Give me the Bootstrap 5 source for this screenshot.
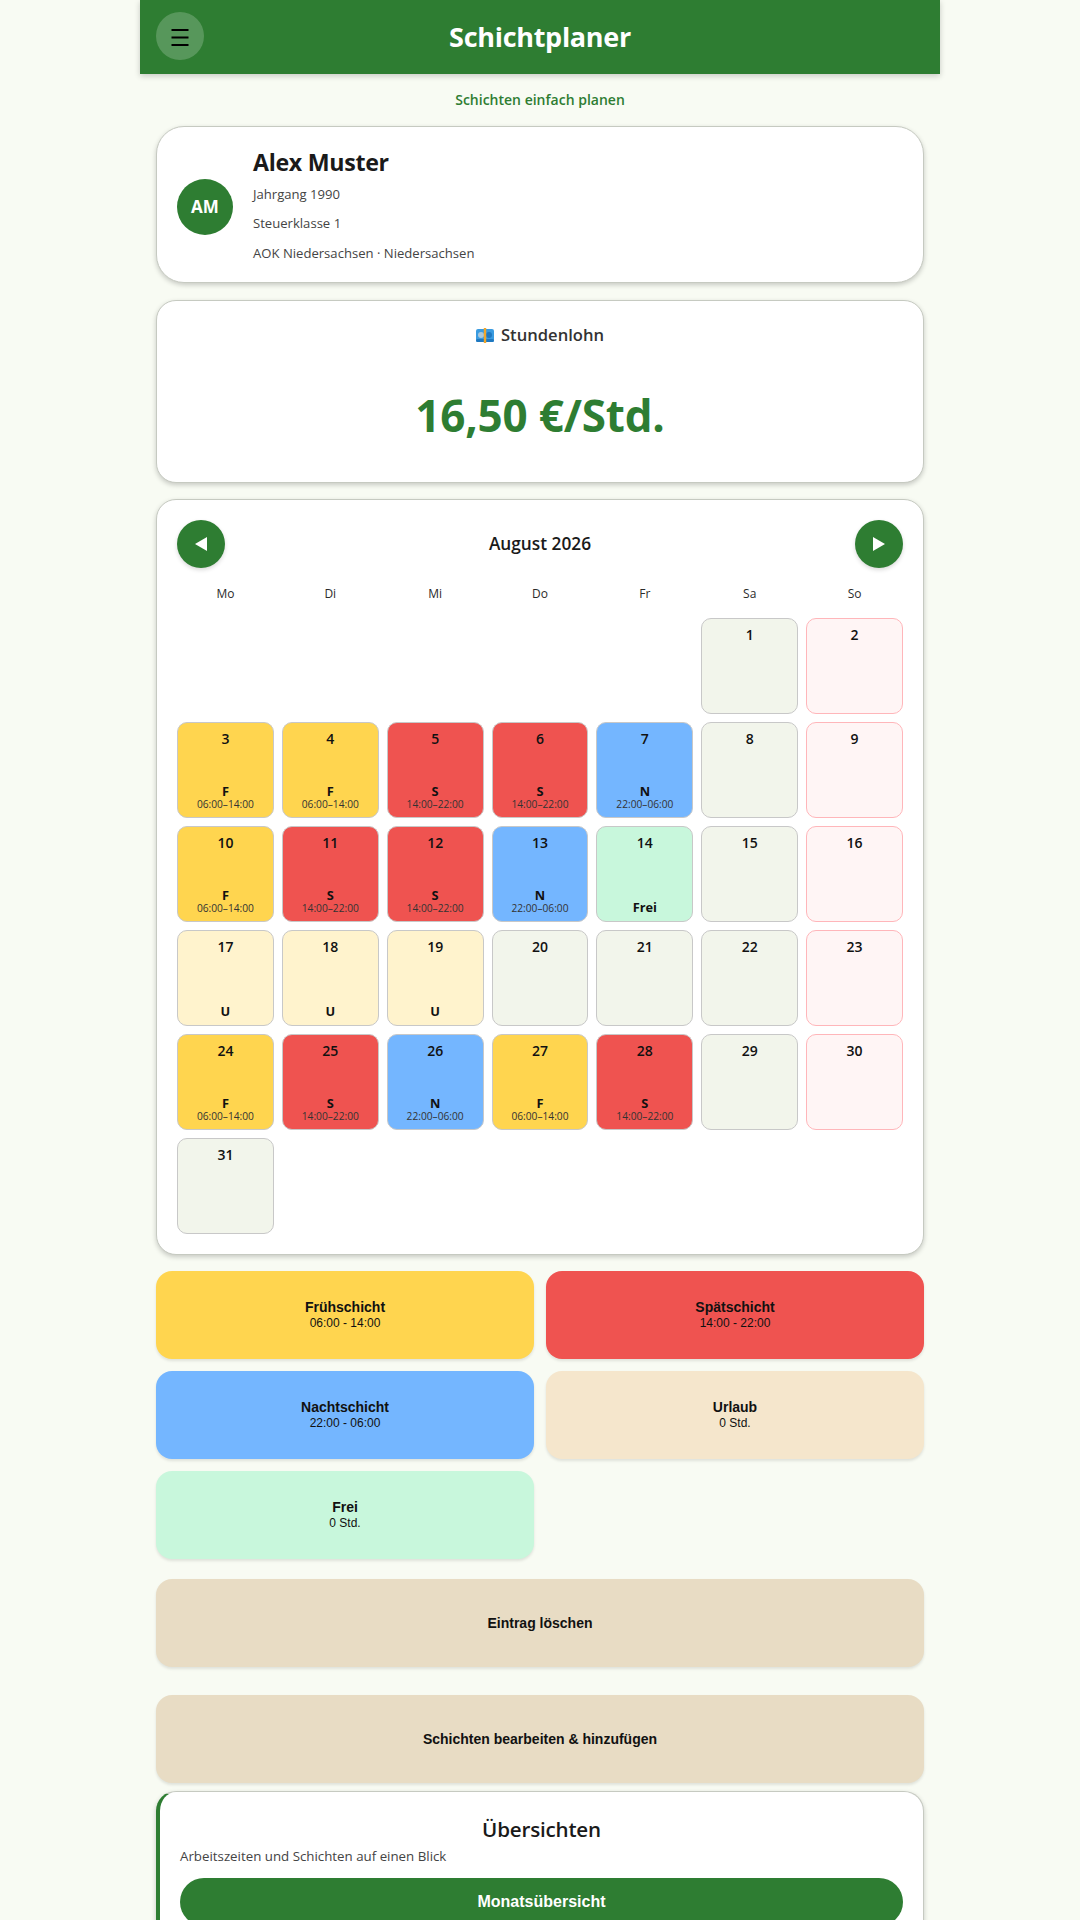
<!DOCTYPE html>
<html lang="de">
<head>
<meta charset="utf-8">
<title>Schichtplaner</title>
<link href="https://cdn.jsdelivr.net/npm/bootstrap@5.3.0/dist/css/bootstrap.min.css" rel="stylesheet">
<style>
html,body{height:1920px;overflow:hidden}
body{background:#f8fbf3;font-family:"Open Sans","Noto Sans",sans-serif;color:#1a1a1a}
.app-shell{width:800px}
.app-head{height:74px;background:#2e7d32;box-shadow:0 2px 6px rgba(0,0,0,.2);padding:0 16px}
.menu-btn,.nav-btn{width:48px;height:48px;border-radius:50%;padding:0;border:0}
.menu-btn{background:rgba(255,255,255,.2);margin-top:-2px}
.app-title{font-size:27px;line-height:36px;font-weight:700;color:#fff;letter-spacing:-.3px;margin:0}
.head-spacer{width:48px}
.app-main{padding:0 16px}
.app-sub{font-size:14px;line-height:20px;font-weight:600;color:#2e7d32;padding-top:16px;margin-bottom:16px}
.panel{background:#fff;border:1px solid #c6cac1;border-radius:20px;box-shadow:0 2px 5px rgba(0,0,0,.2);margin-bottom:17px}
.panel-profile{border-radius:28px;padding:19px 20px 14px}
.avatar{width:56px;height:56px;border-radius:50%;background:#2e7d32;color:#fff;font-weight:700;font-size:17px;margin-right:20px}
.p-name{font-size:23.2px;line-height:33.5px;font-weight:700;letter-spacing:-.3px;margin:0}
.p-line{font-size:13.1px;line-height:29.5px;color:#444;margin:0}
.panel-wage{padding:20px 20px 34px;margin-bottom:16px}
.wage-label{font-size:16.6px;line-height:27px;font-weight:600;color:#333}
.wage-label svg{vertical-align:-2px;margin-right:7px}
.wage-val{font-size:44px;line-height:66px;font-weight:700;color:#2e7d32;margin-top:34px;letter-spacing:-.2px}
.panel-cal{padding:20px;margin-bottom:16px}
.nav-btn{background:#2e7d32;box-shadow:0 2px 4px rgba(0,0,0,.15)}
.cal-month{font-size:17.3px;font-weight:600;color:#1a1a1a;margin:0}
.cal-week,.cal-grid{display:grid;grid-template-columns:repeat(7,1fr);column-gap:8px}
.cal-week{margin-top:16px;margin-bottom:14px;font-size:12px;line-height:20px;font-weight:500;color:#2b2b2b}
.cal-grid{row-gap:8px;grid-auto-rows:96px}
.day{border:1px solid #c8c8c8;border-radius:10px;padding:7px 2px 6px;color:#111}
.day-num{font-size:14px;line-height:18px;font-weight:600}
.day-code{font-size:12.8px;line-height:14px;font-weight:700}
.day-time{font-size:10.2px;line-height:13px;color:#333}
.d-fr{background:#ffd54f}.d-sp{background:#ef5350}.d-na{background:#74b6ff}.d-ur{background:#fff3cd}
.d-fe{background:#c8f7dc}.d-sa{background:#f2f5eb}.d-so{background:#fff5f5;border-color:#ffb6ba}
.d-fe .day-code,.d-ur .day-code{padding-bottom:1px}
.shift-grid{display:grid;grid-template-columns:1fr 1fr;gap:12px}
.shift-btn,.wide-btn{display:block;width:100%;height:88px;border:0;border-radius:16px;box-shadow:0 2px 3px rgba(0,0,0,.1);font-family:"Liberation Sans",Arial,sans-serif;color:#111;padding:0}
.shift-btn b{display:block;font-size:14px;line-height:16px;font-weight:700}
.shift-btn span{display:block;font-size:12px;line-height:16px}
.s-fr{background:#ffd54f}.s-sp{background:#ef5350}.s-na{background:#74b6ff}.s-ur{background:#f5e6cc}.s-fe{background:#c8f7dc}
.wide-btn{background:#e8dcc4;font-size:14px;font-weight:700}
.wb-1{margin-top:20px}.wb-2{margin-top:28px}
.panel-over{margin-top:8px;border-left:4px solid #2e7d32;padding:20px}
.over-title{font-size:20.6px;line-height:35px;font-weight:600;letter-spacing:-.2px;color:#1a1a1a;margin:0}
.over-sub{font-size:13.3px;line-height:20px;color:#444;margin:-1px 0 12px}
.over-btn{display:block;width:100%;height:48px;border:0;border-radius:24px;background:#2e7d32;color:#fff;font-family:"Liberation Sans",Arial,sans-serif;font-size:16px;font-weight:700}
</style>
</head>
<body>
<div class="app-shell mx-auto">
  <header class="app-head d-flex align-items-center">
    <button class="menu-btn btn d-flex align-items-center justify-content-center" aria-label="Menü">
      <svg width="18" height="20" viewBox="0 0 18 20"><rect x="0.5" y="3" width="17" height="2" fill="#000"/><rect x="0.5" y="10.5" width="17" height="2" fill="#000"/><rect x="0.5" y="18" width="17" height="2" fill="#000"/></svg>
    </button>
    <h1 class="app-title flex-grow-1 text-center">Schichtplaner</h1>
    <div class="head-spacer"></div>
  </header>
  <main class="app-main">
    <div class="app-sub text-center">Schichten einfach planen</div>

    <section class="panel panel-profile d-flex align-items-center">
      <div class="avatar flex-shrink-0 d-flex align-items-center justify-content-center">AM</div>
      <div>
        <h2 class="p-name">Alex Muster</h2>
        <p class="p-line">Jahrgang 1990</p>
        <p class="p-line">Steuerklasse 1</p>
        <p class="p-line">AOK Niedersachsen · Niedersachsen</p>
      </div>
    </section>

    <section class="panel panel-wage text-center">
      <div class="wage-label">
        <svg width="18" height="15" viewBox="0 0 18 15"><rect x="0" y="1" width="18" height="13" rx="2" fill="#3a9be0"/><rect x="0" y="11" width="18" height="3" rx="1.5" fill="#1f78c0"/><circle cx="5" cy="7" r="3" fill="#a9c8dc"/><circle cx="13" cy="7" r="3" fill="#1f78c0"/><rect x="7.8" y="0" width="2.4" height="15" fill="#f0a62a"/></svg>Stundenlohn
      </div>
      <div class="wage-val">16,50 €/Std.</div>
    </section>

    <section class="panel panel-cal">
      <div class="d-flex align-items-center justify-content-between">
        <button class="nav-btn btn d-flex align-items-center justify-content-center" aria-label="Zurück"><svg width="12" height="14" viewBox="0 0 12 14"><path d="M12 0V14L0 7Z" fill="#fff"/></svg></button>
        <h3 class="cal-month">August 2026</h3>
        <button class="nav-btn btn d-flex align-items-center justify-content-center" aria-label="Weiter"><svg width="12" height="14" viewBox="0 0 12 14"><path d="M0 0V14L12 7Z" fill="#fff"/></svg></button>
      </div>
      <div class="cal-week text-center"><div>Mo</div><div>Di</div><div>Mi</div><div>Do</div><div>Fr</div><div>Sa</div><div>So</div></div>
      <div class="cal-grid text-center" id="cal">
        <div></div><div></div><div></div><div></div><div></div>
        <div class="day d-sa d-flex flex-column justify-content-between"><div class="day-num">1</div></div>
        <div class="day d-so d-flex flex-column justify-content-between"><div class="day-num">2</div></div>

        <div class="day d-fr d-flex flex-column justify-content-between"><div class="day-num">3</div><div><div class="day-code">F</div><div class="day-time">06:00–14:00</div></div></div>
        <div class="day d-fr d-flex flex-column justify-content-between"><div class="day-num">4</div><div><div class="day-code">F</div><div class="day-time">06:00–14:00</div></div></div>
        <div class="day d-sp d-flex flex-column justify-content-between"><div class="day-num">5</div><div><div class="day-code">S</div><div class="day-time">14:00–22:00</div></div></div>
        <div class="day d-sp d-flex flex-column justify-content-between"><div class="day-num">6</div><div><div class="day-code">S</div><div class="day-time">14:00–22:00</div></div></div>
        <div class="day d-na d-flex flex-column justify-content-between"><div class="day-num">7</div><div><div class="day-code">N</div><div class="day-time">22:00–06:00</div></div></div>
        <div class="day d-sa d-flex flex-column justify-content-between"><div class="day-num">8</div></div>
        <div class="day d-so d-flex flex-column justify-content-between"><div class="day-num">9</div></div>

        <div class="day d-fr d-flex flex-column justify-content-between"><div class="day-num">10</div><div><div class="day-code">F</div><div class="day-time">06:00–14:00</div></div></div>
        <div class="day d-sp d-flex flex-column justify-content-between"><div class="day-num">11</div><div><div class="day-code">S</div><div class="day-time">14:00–22:00</div></div></div>
        <div class="day d-sp d-flex flex-column justify-content-between"><div class="day-num">12</div><div><div class="day-code">S</div><div class="day-time">14:00–22:00</div></div></div>
        <div class="day d-na d-flex flex-column justify-content-between"><div class="day-num">13</div><div><div class="day-code">N</div><div class="day-time">22:00–06:00</div></div></div>
        <div class="day d-fe d-flex flex-column justify-content-between"><div class="day-num">14</div><div class="day-code">Frei</div></div>
        <div class="day d-sa d-flex flex-column justify-content-between"><div class="day-num">15</div></div>
        <div class="day d-so d-flex flex-column justify-content-between"><div class="day-num">16</div></div>

        <div class="day d-ur d-flex flex-column justify-content-between"><div class="day-num">17</div><div class="day-code">U</div></div>
        <div class="day d-ur d-flex flex-column justify-content-between"><div class="day-num">18</div><div class="day-code">U</div></div>
        <div class="day d-ur d-flex flex-column justify-content-between"><div class="day-num">19</div><div class="day-code">U</div></div>
        <div class="day d-sa d-flex flex-column justify-content-between"><div class="day-num">20</div></div>
        <div class="day d-sa d-flex flex-column justify-content-between"><div class="day-num">21</div></div>
        <div class="day d-sa d-flex flex-column justify-content-between"><div class="day-num">22</div></div>
        <div class="day d-so d-flex flex-column justify-content-between"><div class="day-num">23</div></div>

        <div class="day d-fr d-flex flex-column justify-content-between"><div class="day-num">24</div><div><div class="day-code">F</div><div class="day-time">06:00–14:00</div></div></div>
        <div class="day d-sp d-flex flex-column justify-content-between"><div class="day-num">25</div><div><div class="day-code">S</div><div class="day-time">14:00–22:00</div></div></div>
        <div class="day d-na d-flex flex-column justify-content-between"><div class="day-num">26</div><div><div class="day-code">N</div><div class="day-time">22:00–06:00</div></div></div>
        <div class="day d-fr d-flex flex-column justify-content-between"><div class="day-num">27</div><div><div class="day-code">F</div><div class="day-time">06:00–14:00</div></div></div>
        <div class="day d-sp d-flex flex-column justify-content-between"><div class="day-num">28</div><div><div class="day-code">S</div><div class="day-time">14:00–22:00</div></div></div>
        <div class="day d-sa d-flex flex-column justify-content-between"><div class="day-num">29</div></div>
        <div class="day d-so d-flex flex-column justify-content-between"><div class="day-num">30</div></div>

        <div class="day d-sa d-flex flex-column justify-content-between"><div class="day-num">31</div></div>
      </div>
    </section>

    <div class="shift-grid">
      <button class="shift-btn s-fr"><b>Frühschicht</b><span>06:00 - 14:00</span></button>
      <button class="shift-btn s-sp"><b>Spätschicht</b><span>14:00 - 22:00</span></button>
      <button class="shift-btn s-na"><b>Nachtschicht</b><span>22:00 - 06:00</span></button>
      <button class="shift-btn s-ur"><b>Urlaub</b><span>0 Std.</span></button>
      <button class="shift-btn s-fe"><b>Frei</b><span>0 Std.</span></button>
    </div>

    <button class="wide-btn wb-1">Eintrag löschen</button>
    <button class="wide-btn wb-2">Schichten bearbeiten &amp; hinzufügen</button>

    <section class="panel panel-over">
      <h2 class="over-title text-center">Übersichten</h2>
      <p class="over-sub">Arbeitszeiten und Schichten auf einen Blick</p>
      <button class="over-btn">Monatsübersicht</button>
    </section>
  </main>
</div>
<script src="https://cdn.jsdelivr.net/npm/bootstrap@5.3.0/dist/js/bootstrap.bundle.min.js"></script>
</body>
</html>
